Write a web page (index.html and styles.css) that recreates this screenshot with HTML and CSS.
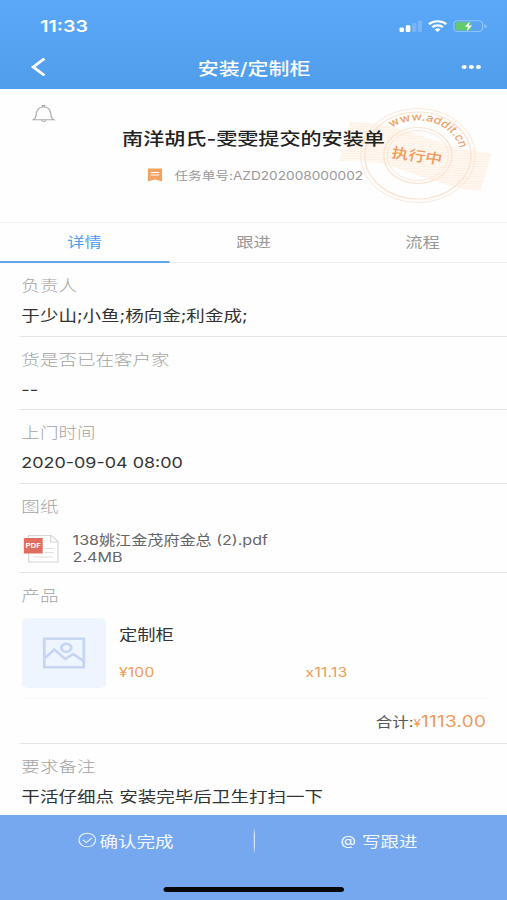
FILE: index.html
```html
<!DOCTYPE html>
<html lang="zh-CN">
<head>
<meta charset="utf-8">
<title>安装/定制柜</title>
<link rel="stylesheet" href="styles.css">
</head>
<body>
<div class="screen">
  <header class="top">
    <div class="status">
      <span class="clock">11:33</span>
      <svg class="status-icons" width="72" height="14" viewBox="0 0 72 14">
        <g fill="#fff">
          <rect x="0.5" y="8.5" width="3.6" height="4.5" rx="1"/>
          <rect x="5.6" y="6.2" width="3.8" height="6.8" rx="1"/>
          <rect x="10.8" y="4" width="3.6" height="9" rx="1" opacity=".2"/>
          <rect x="15.6" y="1.5" width="3.2" height="11.5" rx="1" opacity=".2"/>
        </g>
        <g fill="none" stroke="#fff" stroke-width="2.1">
          <path d="M24.6 5.2a10 10 0 0 1 14.2 0"/>
          <path d="M27.4 8.2a6 6 0 0 1 8.6 0"/>
        </g>
        <path d="M31.7 13l-2.4-2.5a3.4 3.4 0 0 1 4.8 0z" fill="#fff"/>
        <rect x="45" y="1.8" width="23.5" height="10.8" rx="3" fill="none" stroke="#8ec3f8" stroke-width="1"/>
        <path d="M70 5.2a2 2 0 0 1 0 4z" fill="#8ec3f8"/>
        <rect x="46.6" y="3.2" width="13" height="8" rx="1.6" fill="#62cb6c"/>
        <path d="M58 2.4l-4 5.4h2.6l-1 4.4 4.3-5.6h-2.7z" fill="#fff"/>
      </svg>
    </div>
    <nav class="navbar">
      <svg class="back" width="14" height="20" viewBox="0 0 14 20"><path d="M11.400 1.600L2.200 10l9.200 8.400" fill="none" stroke="#fff" stroke-width="2.600"/></svg>
      <h1 class="page-title">安装/定制柜</h1>
      <svg class="more" width="17" height="6" viewBox="0 0 17 6" fill="#fff"><circle cx="2.500" cy="3" r="2.100"/><circle cx="8.300" cy="3" r="2.100"/><circle cx="14.100" cy="3" r="2.100"/></svg>
    </nav>
  </header>

  <section class="summary">
    <svg class="stamp" width="126" height="100" viewBox="0 0 126 100">
      <defs>
        <pattern id="hatch" width="8" height="2.500" patternUnits="userSpaceOnUse" patternTransform="rotate(3)">
          <rect width="8" height="2.500" fill="#fff8f2"/><rect width="8" height="0.800" fill="#feeee0"/>
        </pattern>
        <path id="arc" d="M43.200 22.600A35 35 0 0 1 99.500 51"/>
      </defs>
      <path d="M9 17Q30 17 50 24T92 42Q108 46 125 48L116 86Q96 84 78 76T40 60Q22 54 0 56z" fill="url(#hatch)"/>
      <g fill="none" stroke="#fce4d1">
        <circle cx="64.500" cy="50.500" r="47" stroke-width=".8"/>
        <circle cx="64.500" cy="50.500" r="43.500" stroke-width="1.200"/>
        <circle cx="64.500" cy="50.500" r="28" stroke-width="1.200"/>
        <circle cx="64.500" cy="50.500" r="25" stroke-width=".8"/>
      </g>
      <text class="stamp-url"><textPath href="#arc">www.addit.cn</textPath></text>
      <text class="stamp-state" x="64" y="56" text-anchor="middle" transform="rotate(10 64 50)">执行中</text>
    </svg>
    <svg class="bell" width="20" height="20" viewBox="0 0 20 20" fill="none" stroke="#aaa" stroke-width="1">
      <path d="M1.300 15.800c2.700-1.500 2-4 2.600-7.200C4.500 5 6.500 3 9.700 3s5.200 2 5.800 5.600c.6 3.200-.1 5.700 2.600 7.200z"/>
      <path d="M8.700 3V1.500h2V3M7.900 16a1.900 1.900 0 0 0 3.700 0"/>
    </svg>
    <h2 class="task-title">南洋胡氏-雯雯提交的安装单</h2>
    <div class="task-no">
      <svg width="12" height="14" viewBox="0 0 12 14"><path d="M0 0.500h12V13.500L6 11.500 0 13.500z" fill="#f3a361"/><path d="M2.500 4.500h7M2.500 7h7" stroke="#fff" stroke-width="1"/></svg>
      <span>任务单号:AZD202008000002</span>
    </div>
  </section>

  <nav class="tabs">
    <span class="tab active">详情</span>
    <span class="tab">跟进</span>
    <span class="tab">流程</span>
  </nav>

  <main class="fields">
    <section class="field"><h3>负责人</h3><p>于少山;小鱼;杨向金;利金成;</p></section>
    <section class="field"><h3>货是否已在客户家</h3><p>--</p></section>
    <section class="field"><h3>上门时间</h3><p class="date">2020-09-04 08:00</p></section>
    <section class="field drawings">
      <h3>图纸</h3>
      <div class="file">
        <svg width="30" height="30" viewBox="0 0 30 30">
          <path d="M4.500 1.500h18.500l5.500 6v20.500h-24z" fill="#fff" stroke="#d6d6d6" stroke-width="1"/>
          <path d="M22.500 1.500v6.500h6" fill="none" stroke="#d6d6d6"/>
          <path d="M18 14.500h7M18 18.500h7M8 23h16" stroke="#ddd" stroke-width="1"/>
          <rect x="0.500" y="4" width="15.500" height="15.500" fill="#df6e61"/>
          <text class="pdf-tag" x="8.200" y="14.200" text-anchor="middle">PDF</text>
        </svg>
        <div class="file-text"><div>138姚江金茂府金总 (2).pdf</div><div>2.4MB</div></div>
      </div>
    </section>
    <section class="field products">
      <h3>产品</h3>
      <div class="product">
        <div class="thumb">
          <svg width="35" height="32" viewBox="0 0 35 32" fill="none" stroke="#c6d5f1" stroke-width="2.400">
            <rect x="1.200" y="1.700" width="32.600" height="28.600"/>
            <circle cx="19.300" cy="10.800" r="4"/>
            <path d="M2 21l7.500-8.500 9 9.500 6.500-5 8.500 7"/>
          </svg>
        </div>
        <div class="product-text">
          <div class="product-name">定制柜</div>
          <div class="product-row"><span class="price">¥100</span><span class="qty">x11.13</span></div>
        </div>
      </div>
      <div class="total">合计:<span class="yen">¥</span><span class="amount">1113.00</span></div>
    </section>
    <section class="field remark"><h3>要求备注</h3><p>干活仔细点 安装完毕后卫生打扫一下</p></section>
  </main>

  <footer class="bottom">
    <div class="actions">
      <span class="action"><svg width="15" height="16" viewBox="0 0 15 16" fill="none" stroke="#eaf2fd" stroke-width="1"><circle cx="7.500" cy="8" r="6.800"/><path d="M4 7.800l2.700 2.700 4.600-4.700"/></svg>确认完成</span>
      <i class="divider"></i>
      <span class="action"><span class="at">@</span>写跟进</span>
    </div>
    <div class="home-bar"></div>
  </footer>
</div>
</body>
</html>
```
FILE: styles.css
```css
* { box-sizing: border-box; }
body { margin: 0; overflow: hidden; background: #fff; }
h1, h2, h3, p { margin: 0; font-weight: 400; }
svg { display: block; flex: none; }

.screen {
  width: 415.574px;
  height: 900px;
  transform: scaleX(1.22);
  transform-origin: 0 0;
  display: flex;
  flex-direction: column;
  background: #fefefe;
  font-family: Inter, "Noto Sans CJK SC", sans-serif;
  color: #333;
  white-space: nowrap;
}

.top { height: 89px; background: linear-gradient(#5ba8f9, #509dea); color: #fff; }
.status { height: 46px; padding: 6px 17px 0 33px; display: flex; align-items: center; justify-content: space-between; }
.clock { font-size: 16px; font-weight: 600; }
.navbar { height: 42px; padding: 0 21px 0 25px; display: flex; align-items: center; justify-content: space-between; }
.page-title { font-size: 17.200px; font-weight: 500; }

.summary { position: relative; height: 134px; border-bottom: 1px solid #f3f3f3; text-align: center; }
.bell { position: absolute; left: 26px; top: 15px; }
.task-title { position: relative; padding-top: 38px; line-height: 24px; font-size: 17.300px; font-weight: 500; color: #222; }
.task-no { position: relative; margin-top: 13px; height: 22px; display: flex; align-items: center; justify-content: center; gap: 10px; padding-left: 3px; font-size: 11.200px; color: #999; }
.stamp { position: absolute; left: 278px; top: 16px; }
.stamp-url { font-size: 10.500px; font-weight: 500; letter-spacing: .1px; fill: #f0a065; }
.stamp-state { font-size: 14px; font-weight: 500; fill: #f09a5c; }

.tabs { height: 40px; display: flex; border-bottom: 1px solid #eee; }
.tab { flex: 1; height: 40px; line-height: 38px; text-align: center; font-size: 14.200px; color: #999; }
.tab.active { color: #509ef0; border-bottom: 2px solid #64a5ee; }

.fields { height: 552px; padding-left: 16px; }
.field { height: 73.500px; padding: 10px 0 0 1.500px; border-bottom: 1px solid #e4e4e4; }
.field h3 { height: 26px; line-height: 25px; font-size: 15.200px; font-weight: 300; color: #a4a4a4; }
.field p { margin-top: 4px; height: 26px; line-height: 26px; font-size: 15.200px; }
.field .date { font-size: 14.700px; }
.field.drawings { height: 89px; }
.file { margin-top: 10px; padding-left: 1px; display: flex; gap: 11px; align-items: center; height: 38px; }
.file-text { font-size: 13.200px; line-height: 17px; color: #666; }
.pdf-tag { font-size: 6.500px; font-weight: 600; fill: #fff; }
.field.products { height: 171px; }
.product { display: flex; gap: 11px; margin-top: 9px; padding-bottom: 10px; border-bottom: 1px solid #f8f8f8; margin-right: 17px; }
.thumb { width: 69px; height: 70px; border-radius: 5px; background: #eff5fe; display: flex; align-items: center; justify-content: center; }
.product-text { flex: 1; }
.product-name { height: 34px; line-height: 34px; font-size: 15px; }
.product-row { display: grid; grid-template-columns: 153px 1fr; margin-top: 10px; line-height: 22px; font-size: 12.800px; letter-spacing: .2px; color: #f09a55; }
.total { height: 47px; line-height: 46px; padding-right: 17px; text-align: right; font-size: 13.500px; color: #555; }
.yen { font-size: 11px; color: #f09a55; }
.amount { font-size: 15.500px; letter-spacing: .25px; color: #f09a55; }
.field.remark { height: 71px; border: 0; }

.bottom { height: 85px; background: #76a8f0; color: #f3f8ff; }
.actions { height: 52px; padding: 0 0 2px 1px; display: grid; grid-template-columns: 1fr 1px 1fr; align-items: center; }
.action { display: flex; align-items: center; justify-content: center; gap: 3px; padding-right: 3px; font-size: 15.200px; }
.at { font-size: 13px; margin-right: 2px; }
.divider { width: 1px; height: 27px; background: linear-gradient(transparent, #dce9fc 30%, #dce9fc 70%, transparent); }
.home-bar { width: 148px; height: 5px; margin: 20px auto 0; border-radius: 3px; background: #080808; }
```
